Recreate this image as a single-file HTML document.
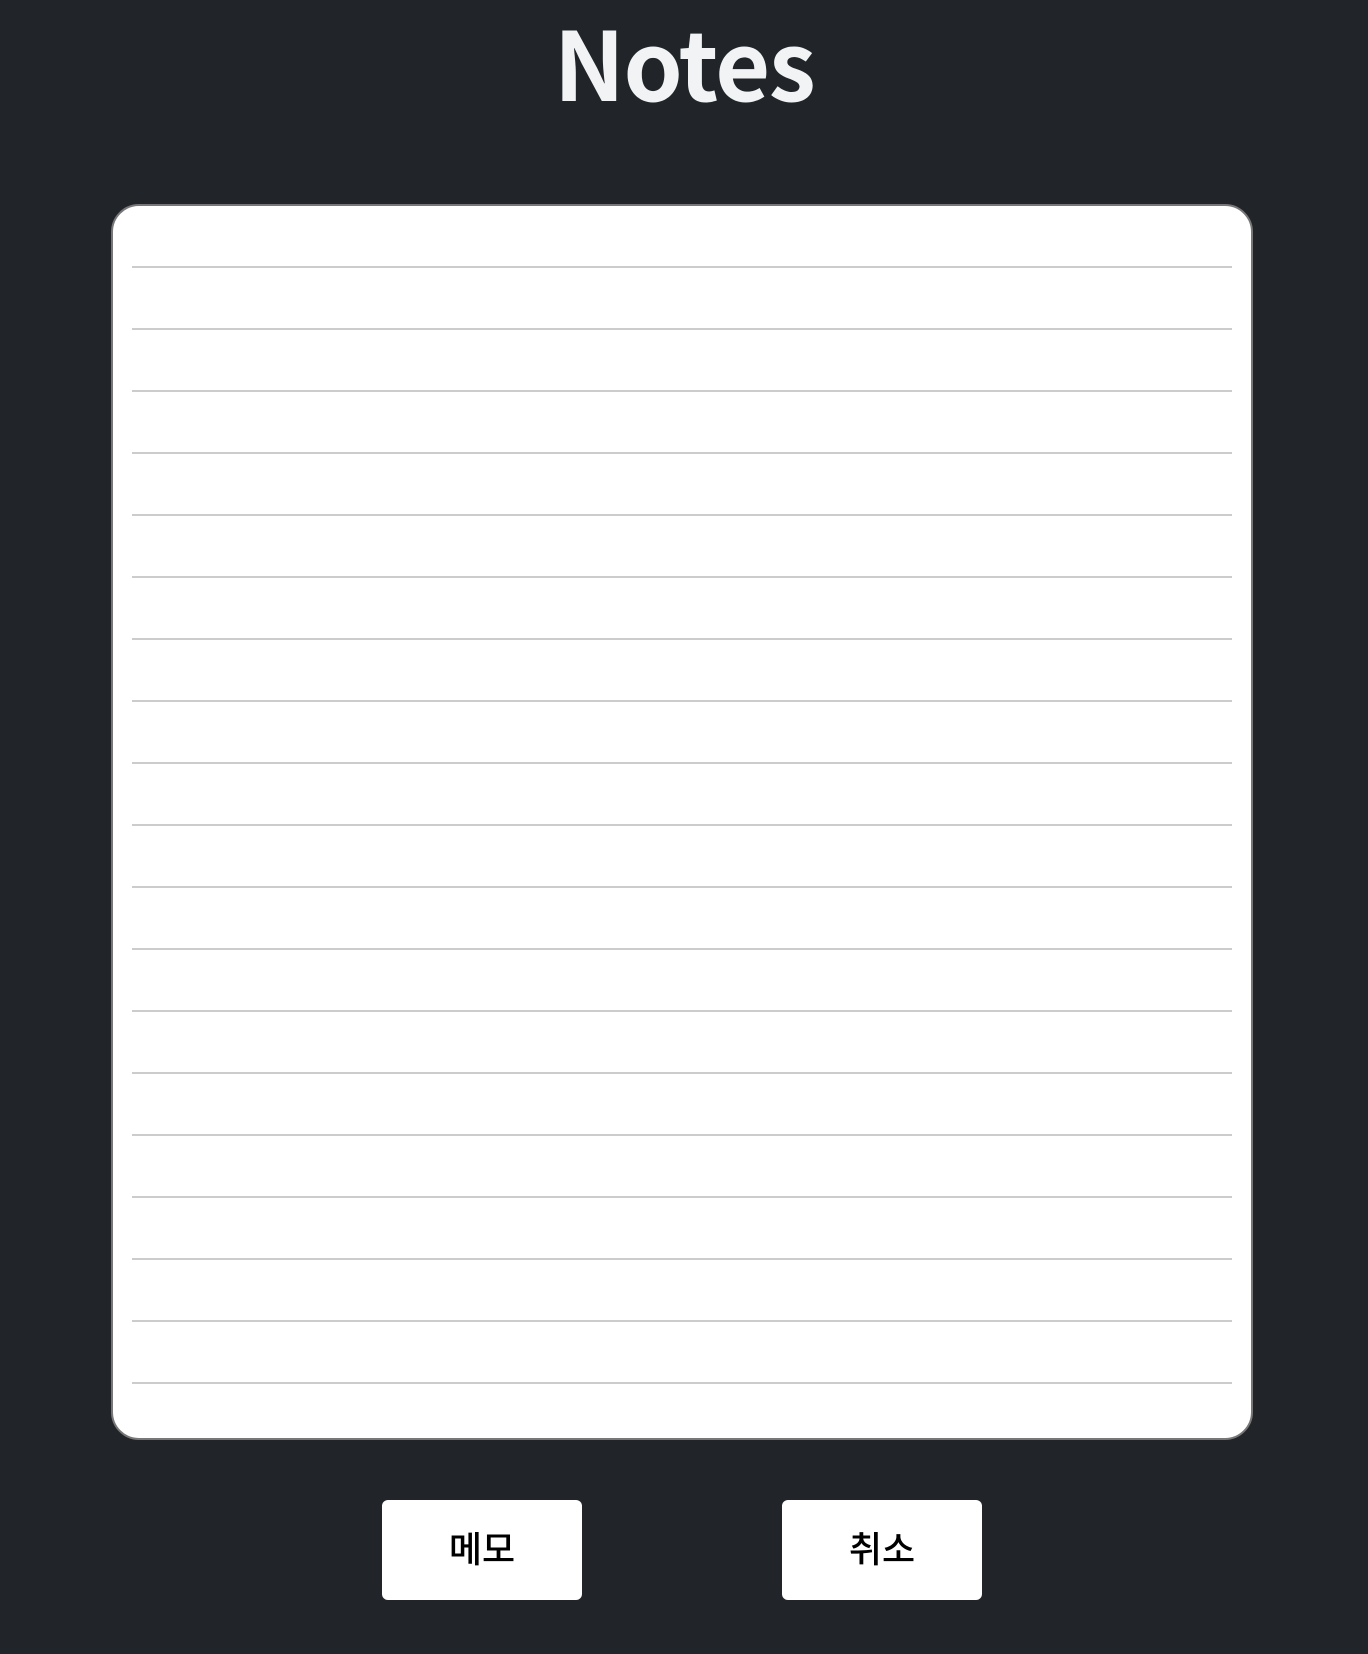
<!DOCTYPE html>
<html><head><meta charset="utf-8"><style>
html,body{margin:0;padding:0;}
body{width:1368px;height:1654px;background:#212529;position:relative;overflow:hidden;font-family:"Liberation Sans","Noto Sans CJK KR",sans-serif;}
h1{position:absolute;left:0;width:1368px;top:13px;margin:0;text-align:center;font-family:"Noto Sans CJK KR","Liberation Sans",sans-serif;font-weight:700;font-size:95px;line-height:96px;color:#f1f3f5;letter-spacing:-1.6px;}
.card{position:absolute;left:111px;top:204px;width:1142px;height:1236px;background:#fff;border:2px solid #777;border-radius:28px;box-sizing:border-box;}
.line{position:absolute;left:132px;width:1100px;height:2px;background:#ccc;}
.btn{position:absolute;top:1500px;width:200px;height:100px;background:#fff;border-radius:6px;text-align:center;line-height:94px;font-family:"Noto Sans CJK KR",sans-serif;font-weight:500;font-size:36px;color:#000;}
</style></head><body>
<h1>Notes</h1>
<div class="card"></div>
<div class="line" style="top:266px"></div>
<div class="line" style="top:328px"></div>
<div class="line" style="top:390px"></div>
<div class="line" style="top:452px"></div>
<div class="line" style="top:514px"></div>
<div class="line" style="top:576px"></div>
<div class="line" style="top:638px"></div>
<div class="line" style="top:700px"></div>
<div class="line" style="top:762px"></div>
<div class="line" style="top:824px"></div>
<div class="line" style="top:886px"></div>
<div class="line" style="top:948px"></div>
<div class="line" style="top:1010px"></div>
<div class="line" style="top:1072px"></div>
<div class="line" style="top:1134px"></div>
<div class="line" style="top:1196px"></div>
<div class="line" style="top:1258px"></div>
<div class="line" style="top:1320px"></div>
<div class="line" style="top:1382px"></div>
<div class="btn" style="left:382px">메모</div>
<div class="btn" style="left:782px">취소</div>
</body></html>
